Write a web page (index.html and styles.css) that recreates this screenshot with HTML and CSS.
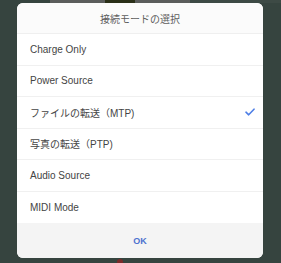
FILE: index.html
```html
<!DOCTYPE html>
<html lang="ja">
<head>
  <meta charset="UTF-8">
  <meta name="viewport" content="width=device-width, initial-scale=1.0">
  <title>接続モードの選択</title>
  <link rel="stylesheet" href="styles.css">
</head>
<body>
  <div class="backdrop-strip">
    <span class="strip-dark"></span>
    <span class="strip-gray"></span>
    <span class="strip-photo"></span>
    <span class="strip-gray"></span>
    <span class="strip-dim"></span>
  </div>

  <div class="dialog">
    <div class="dialog-title">接続モードの選択</div>

    <ul class="options">
      <li class="option">Charge Only</li>
      <li class="option">Power Source</li>
      <li class="option selected">
        ファイルの転送（MTP)
        <svg class="check" width="10" height="8" viewBox="0 0 10 8">
          <path d="M1 4.2 L3.7 6.8 L9 1.2" fill="none" stroke="#4f7fe6" stroke-width="1.6" stroke-linecap="round" stroke-linejoin="round"/>
        </svg>
      </li>
      <li class="option">写真の転送（PTP)</li>
      <li class="option">Audio Source</li>
      <li class="option last">MIDI Mode</li>
    </ul>

    <div class="dialog-footer">
      <button class="ok-btn">OK</button>
    </div>
  </div>

  <div class="under-dot"></div>
</body>
</html>
```

FILE: styles.css
```css
* {
  margin: 0;
  padding: 0;
  box-sizing: border-box;
}

body {
  font-family: "Liberation Sans", "Noto Sans CJK JP", sans-serif;
  background: #36443f;
  width: 281px;
  height: 263px;
  overflow: hidden;
}

.backdrop-strip {
  display: flex;
  height: 3px;
}

.strip-dark {
  width: 50px;
  background: #36443f;
}

.strip-gray {
  width: 55px;
  background: #5b5d5c;
}

.strip-photo {
  width: 30px;
  background: #2a2f18;
}

.strip-dim {
  flex: 1;
  background: #3d4a45;
}

.dialog {
  margin-left: 17px;
  width: 246px;
  background: #ffffff;
  border-radius: 6px;
  overflow: hidden;
}

.dialog-title {
  height: 31px;
  line-height: 31px;
  text-align: center;
  font-family: "Noto Sans CJK JP", sans-serif;
  font-size: 10px;
  color: #5e5e5e;
  background: #fbfbfb;
  border-bottom: 1px solid #efefef;
}

.options {
  list-style: none;
}

.option {
  height: 31.5px;
  padding: 0 8px 0 13px;
  display: flex;
  align-items: center;
  justify-content: space-between;
  font-size: 10px;
  color: #444444;
  border-bottom: 1px solid #f0f0f0;
}

.option.last {
  border-bottom: none;
}

.check {
  display: block;
}

.dialog-footer {
  height: 35px;
  background: #f4f4f4;
  display: flex;
  align-items: center;
  justify-content: center;
}

.ok-btn {
  border: none;
  background: none;
  font-family: "Liberation Sans", sans-serif;
  font-size: 9px;
  font-weight: bold;
  color: #4d72cf;
}

.under-dot {
  width: 6px;
  height: 6px;
  margin: 1px 0 0 117px;
  border-radius: 50%;
  background: #7a2a2a;
}
```
